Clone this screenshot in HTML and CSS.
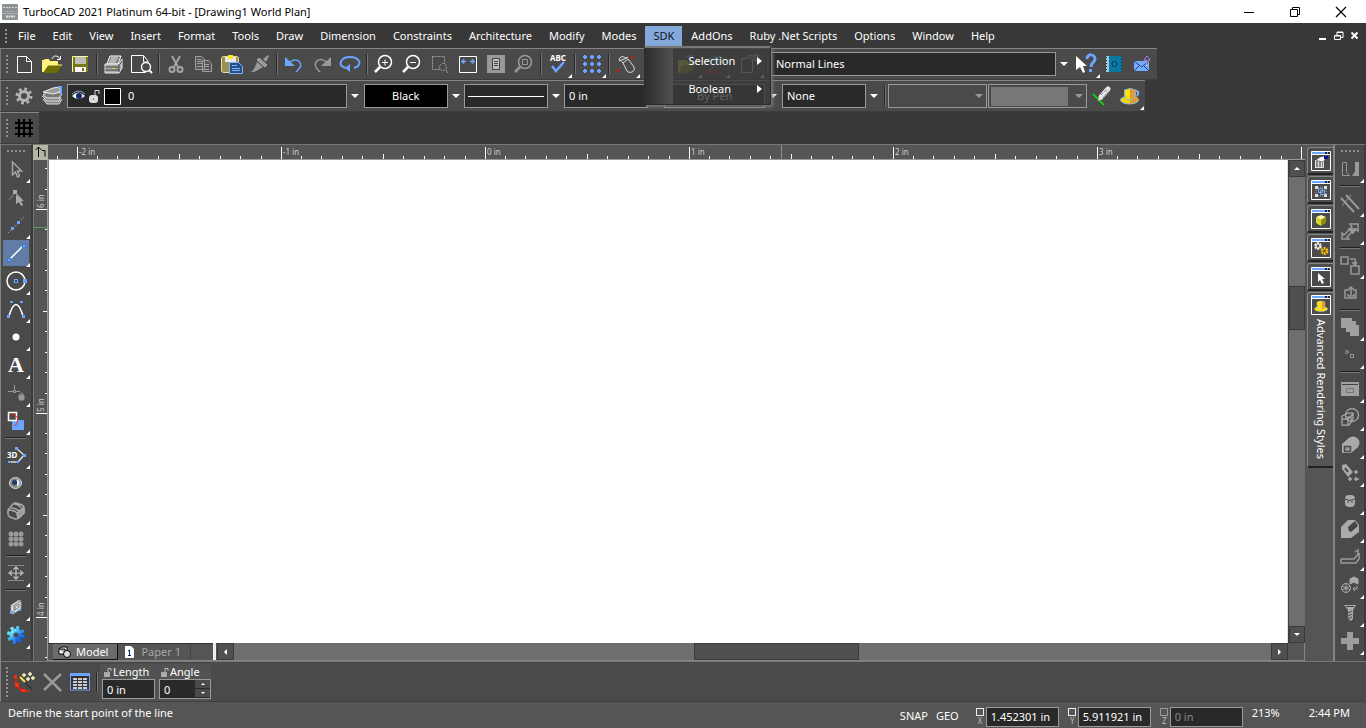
FILE: index.html
```html
<!DOCTYPE html>
<html lang="en">
<head>
<meta charset="utf-8">
<title>TurboCAD 2021 Platinum 64-bit - [Drawing1 World Plan]</title>
<link rel="stylesheet" href="styles.css">
</head>
<body>
<header class="titlebar">
  <svg class="app-icon" viewBox="0 0 16 16"><rect width="16" height="16" rx="1" fill="#8d9294"/><path d="M1 3.500h14" stroke="#d5d8d9" stroke-dasharray="2 1"/><path d="M3 7.500h10" stroke="#b6babb" stroke-dasharray="1 1"/><path d="M0 9.500h16" stroke="#a9adae"/><path d="M4 12.500h9" stroke="#dfe1e2" stroke-width="2" stroke-dasharray="2 .5"/></svg>
  <span class="title">TurboCAD 2021 Platinum 64-bit - [Drawing1 World Plan]</span>
  <div class="window-buttons">
    <button aria-label="Minimize"><svg viewBox="0 0 12 12"><path d="M1 6.500h10" stroke="#000"/></svg></button>
    <button aria-label="Restore"><svg viewBox="0 0 12 12" fill="none" stroke="#000"><path d="M1.500 3.500h7v7h-7zM3.500 3.500v-2h7v7h-2"/></svg></button>
    <button aria-label="Close"><svg viewBox="0 0 12 12"><path d="M1 1l10 10M11 1L1 11" stroke="#000" stroke-width="1.200"/></svg></button>
  </div>
</header>

<nav class="menubar">
  <span class="grip"></span>
  <button>File</button><button>Edit</button><button>View</button><button>Insert</button><button>Format</button><button>Tools</button><button>Draw</button><button>Dimension</button><button>Constraints</button><button>Architecture</button><button>Modify</button><button>Modes</button>
  <div class="menu-open">
    <button class="selected">SDK</button>
    <div class="popup">
      <button>Selection<i></i></button>
      <button>Boolean<i></i></button>
    </div>
  </div>
  <button>AddOns</button><button>Ruby .Net Scripts</button><button>Options</button><button>Window</button><button>Help</button>
  <div class="doc-buttons">
    <button aria-label="Minimize drawing"><svg viewBox="0 0 10 10"><path d="M1 8h7" stroke="#fff" stroke-width="2"/></svg></button>
    <button aria-label="Restore drawing"><svg viewBox="0 0 10 10" fill="none" stroke="#fff"><path d="M.5 4.500h6v4h-6zM.5 5h6M3 4V1h6v5.500H7M3 1.500h6"/></svg></button>
    <button aria-label="Close drawing"><svg viewBox="0 0 10 10"><path d="M1.500 1.500l6 6M7.500 1.500l-6 6" stroke="#fff" stroke-width="2"/></svg></button>
  </div>
</nav>

<section class="bars">
<div class="toolbar">
  <span class="grip"></span>
  <button class="tool" aria-label="New"><svg viewBox="0 0 24 24"><path d="M5.500 4.500h9l5 5v11h-14zM14.500 4.500v5h5" fill="#484848" stroke="#fff"/></svg></button>
  <button class="tool" aria-label="Open"><svg viewBox="0 0 24 24"><path d="M2 8h2l1-1h4l1 2h8v4H8l-4 7H2z" fill="#fff27a"/><path d="M8 13h14l-5 8H3z" fill="#6d6d00"/><path d="M3 20l5-7h14" fill="none" stroke="#fff58b"/><path d="M12 7c1-4 6-4 8 0M20.500 4v3.500H17" fill="none" stroke="#fff"/></svg></button>
  <button class="tool" aria-label="Save"><svg viewBox="0 0 24 24"><path d="M4 4h16v16H4z" fill="#77771c"/><path d="M7 4h11v8H7z" fill="#bcbcbc"/><path d="M7 15h11v5H7z" fill="#f7f7f7"/><path d="M14 16h2v3h-2z" fill="#77771c"/><path d="M4.500 20V4.500h15.500" fill="none" stroke="#fffa9c"/></svg></button>
  <span class="sep"></span>
  <button class="tool" aria-label="Print"><svg viewBox="0 0 24 24"><path d="M8 4h11l-3 8H5z" fill="#777" stroke="#fff"/><path d="M9 6h7M8 8h7M7 10h7" stroke="#eee"/><path d="M3 12h14l3-5v9l-3 5H3z" fill="#aaa" stroke="#eee"/><path d="M3 15h14M3 18h14M17 12v8M18 12l2-3" stroke="#444"/><path d="M10 16.500h3" stroke="#dd3"/></svg></button>
  <button class="tool" aria-label="Print preview"><svg viewBox="0 0 24 24"><path d="M18.500 9.500l-5-6h-12v17h14M13.500 4v6h5" fill="none" stroke="#fff"/><circle cx="16" cy="15" r="4.500" fill="#4a4a4a" stroke="#fff" stroke-width="1.500"/><path d="M19 18l3 3" stroke="#fff" stroke-width="2"/></svg></button>
  <span class="sep"></span>
  <button class="tool" aria-label="Cut"><svg viewBox="0 0 24 24" fill="none" stroke="#a5a5a5" stroke-width="2"><path d="M8 4l6 11M16 4l-6 11"/><circle cx="8" cy="17.500" r="2.500"/><circle cx="16" cy="17.500" r="2.500"/></svg></button>
  <button class="tool" aria-label="Copy"><svg viewBox="0 0 24 24" fill="#555" stroke="#a0a0a0"><path d="M3.500 4.500h6l3 3v10h-9zM5 7.500h4M5 9.500h5M5 11.500h5M5 14.500h5M10.500 8.500h6l3 3v8h-9zM12 12.500h5M12 14.500h5M12 17.500h5"/></svg></button>
  <button class="tool" aria-label="Paste"><svg viewBox="0 0 24 24"><rect x="1.500" y="4.500" width="17" height="16" rx="2" fill="#9a9250" stroke="#e8dc9a"/><path d="M5 5h11v5H5z" fill="#e8e8e8"/><path d="M8 3h5v4H8z" fill="#ffe71c"/><path d="M9.500 10.500h9l4 4v7h-13z" fill="#264f83" stroke="#82b4ff"/><path d="M12 13.500h5M12 16.500h8M12 18.500h8" stroke="#82b4ff"/></svg></button>
  <button class="tool" aria-label="Format painter"><svg viewBox="0 0 24 24" fill="#999"><path d="M15 7l5-4 1 1-3 6z"/><path d="M11 6l8 7-2 2-8-7z" stroke="#aaa"/><path d="M9 10l6 5-5 3-4 2H3l3-3z"/></svg></button>
  <span class="sep"></span>
  <button class="tool" aria-label="Undo"><svg viewBox="0 0 24 24"><path d="M8 10c7-6 15 2 8 8l-2 2" fill="none" stroke="#6aa5ff" stroke-width="1.500"/><path d="M3 5v9h10z" fill="#6aa5ff"/></svg></button>
  <button class="tool" aria-label="Redo"><svg viewBox="0 0 24 24"><path d="M16 10C9 3 1 12 8 18l2 2" fill="none" stroke="#999" stroke-width="1.500"/><path d="M21 5v9H11z" fill="#999"/></svg></button>
  <button class="tool" aria-label="Redraw"><svg viewBox="0 0 24 24"><path d="M8 16C-2 14 3 5 12 5s14 8 4 11" fill="none" stroke="#6aa5ff" stroke-width="2"/><path d="M7 16l5-4v8z" fill="#6aa5ff"/></svg></button>
  <span class="sep"></span>
  <button class="tool" aria-label="Zoom in"><svg viewBox="0 0 24 24" fill="none" stroke="#fff"><circle cx="13" cy="10" r="6.500" stroke-width="1.500"/><path d="M8 15l-5 5" stroke-width="2.500"/><path d="M10 10.500h6M13 7.500v6"/></svg></button>
  <button class="tool" aria-label="Zoom out"><svg viewBox="0 0 24 24" fill="none" stroke="#fff"><circle cx="13" cy="10" r="6.500" stroke-width="1.500"/><path d="M8 15l-5 5" stroke-width="2.500"/><path d="M10 10.500h6"/></svg></button>
  <button class="tool" aria-label="Zoom window"><svg viewBox="0 0 24 24" fill="none" stroke="#a0a0a0"><path d="M4.500 4.500h12v13h-12z" stroke-dasharray="2 1"/><circle cx="15" cy="15" r="3.500" fill="#4a4a4a" stroke-dasharray="2 1"/><path d="M18 18l2 3"/></svg></button>
  <button class="tool" aria-label="Zoom extents"><svg viewBox="0 0 24 24"><path d="M3.500 4.500h17v16h-17z" fill="none" stroke="#fff"/><path d="M8 7v5L5 9.500zM16 7v5l3-2.500zM7 9h3v1H7zM14 9h3v1h-3z" fill="#6aa5ff" stroke="#6aa5ff" stroke-width=".5"/></svg></button>
  <button class="tool" aria-label="Full view"><svg viewBox="0 0 24 24"><path d="M3 3h18v18H3z" fill="#999"/><path d="M8.500 6.500h7v11h-7z" fill="#bbb" stroke="#444"/><path d="M10 9.500h4M10 11.500h4M10 13.500h4" stroke="#444"/></svg></button>
  <button class="tool" aria-label="Zoom selected"><svg viewBox="0 0 24 24" fill="none" stroke="#999"><circle cx="13" cy="10" r="6.500" stroke-width="1.500"/><path d="M8 15l-5 5" stroke-width="2.500"/><path d="M10.500 7.500h5v5h-5z"/></svg></button>
  <span class="sep"></span>
  <button class="tool more" aria-label="Spelling"><svg viewBox="0 0 24 24"><text x="12" y="9" text-anchor="middle" class="abc">ABC</text><path d="M6 14l4 5 8-9" fill="none" stroke="#6aa5ff" stroke-width="2.500"/></svg></button>
  <span class="sep"></span>
  <button class="tool more" aria-label="Grid"><svg viewBox="0 0 24 24" fill="none" stroke="#6aa5ff" stroke-width="2"><path d="M3 5h18M3 12h18M3 19h18" stroke-dasharray="4 3"/><path d="M5 3v18M12 3v18M19 3v18" stroke-dasharray="4 3"/></svg></button>
  <span class="sep"></span>
  <button class="tool more" aria-label="Mouse settings"><svg viewBox="0 0 24 24" fill="none" stroke="#ddd"><path d="M9 11l5-4 6 8c2 5-5 7-7 4zM9 11c-2-5-6-1-3-5 3-4 5 2 8-1M5 9l8-3"/><path d="M16 4l3 3M19 4l-3 3M2 17l3 3M5 17l-3 3" stroke="#e00"/></svg></button>
  <button class="tool" aria-label="Workplane"></button>
  <span class="sep"></span>
  <button class="tool more" aria-label="Open workspace"><svg viewBox="0 0 24 24"><path d="M2 8h8l2 2h7v3H7l-4 8H2z" fill="#d3c94c"/><path d="M7 13h12l-5 8H3z" fill="#8c8c18"/><path d="M10 6l5-4 4 5z" fill="#6aa5ff"/></svg></button>
  <button class="tool more" aria-label="3D view"><svg viewBox="0 0 24 24" fill="none"><path d="M5 7l8-3 6 2-6 4z" stroke="#3aa99a" stroke-width="2"/><path d="M2 20h12" stroke="#f22" stroke-width="2"/><path d="M5 19l8-8" stroke="#4bc"/></svg></button>
  <span class="sep"></span>
  <button class="tool more" aria-label="Properties"><svg viewBox="0 0 24 24" fill="none" stroke="#ccc"><path d="M3.500 6.500h11v14h-11z"/><path d="M7 7l4-4 4 1 5-2v7l-6-1" fill="#777"/></svg></button>
  <span class="sep"></span>
  <label class="combo style-combo"><select aria-label="Style"><option>Normal Lines</option></select><i class="arrow"></i></label>
  <button class="tool more" aria-label="Context help"><svg viewBox="0 0 24 24"><path d="M2 4v14l4-3 3 6 2-1-2-6h4z" fill="#fff"/><path d="M13 7c0-6 8-5 8 0 0 4-4 3-4 8" fill="none" stroke="#6aa5ff" stroke-width="3"/><path d="M15 17h3v3h-3z" fill="#6aa5ff"/></svg></button>
  <button class="tool" aria-label="Address book"><svg viewBox="0 0 24 24"><path d="M4 4h16v16H4z" fill="#0a78a4"/><path d="M4 4h3v16H4z" fill="#9ccbe0"/><circle cx="12.500" cy="12" r="2.500" fill="none" stroke="#073a57"/><path d="M4.500 5v15M19.500 4v16" stroke="#222" stroke-dasharray="1 2"/></svg></button>
  <button class="tool" aria-label="Send mail"><svg viewBox="0 0 24 24"><path d="M4 9h15v10H4z" fill="#75acff"/><path d="M4 9l7.500 6L19 9M4 19l5-5M19 19l-5-5" fill="none" stroke="#263f70"/><path d="M16.500 13V8H14l3-4 3 4h-2v5z" fill="#5220a8" stroke="#eee" stroke-width=".5"/></svg></button>
</div>

<div class="toolbar">
  <span class="grip"></span>
  <button class="tool" aria-label="Options"><svg viewBox="0 0 24 24"><circle cx="12" cy="12" r="4.500" fill="none" stroke="#b3b3b3" stroke-width="3"/><circle cx="12" cy="12" r="7" fill="none" stroke="#b3b3b3" stroke-width="3" stroke-dasharray="2.750 2.750"/></svg></button>
  <button class="tool" aria-label="Layers"><svg viewBox="0 0 24 24"><path d="M3 15l4 5h12l3-5M2 12l5 5h12l2-4" fill="#888" stroke="#ddd"/><path d="M7 8h11l4 2-3 4H7l-4-3z" fill="#777" stroke="#eee"/><path d="M3 8l10-4 7-1v5l-7 2z" fill="#9a9a9a" stroke="#eee"/><path d="M18 3h3v7" fill="none" stroke="#6aa5ff" stroke-width="2"/></svg></button>
  <label class="combo layer-combo">
    <svg class="layer-icons" viewBox="0 0 56 20"><path d="M2 10q6-7 13 0-7 6-13 0" fill="#fff"/><path d="M2 8q7-6 13 0" fill="none" stroke="#8ca6d8"/><circle cx="9" cy="10" r="3" fill="#112c68"/><rect x="19" y="9" width="9" height="8" rx="3" fill="#ddd"/><path d="M25 10V4.500h4V8" fill="none" stroke="#ddd"/><path d="M23.500 12v2" stroke="#777"/><path d="M34.500 2.500h16v16h-16z" fill="#000" stroke="#fff"/></svg>
    <select aria-label="Layer"><option>0</option></select><i class="arrow"></i></label>
  <label class="combo small black"><select aria-label="Pen color"><option>Black</option></select><i class="arrow"></i></label>
  <label class="combo small line"><select aria-label="Line pattern"><option aria-label="Solid"></option></select><i class="arrow"></i></label>
  <label class="combo small"><select aria-label="Pen width"><option>0 in</option></select><i class="arrow"></i></label>
  <label class="combo pen-combo"><select aria-label="Brush color"><option>By Pen</option></select><i class="arrow"></i></label>
  <label class="combo small"><select aria-label="Brush pattern"><option>None</option></select><i class="arrow"></i></label>
  <span class="sep"></span>
  <label class="combo disabled"><select aria-label="Material" disabled><option></option></select><i class="arrow"></i></label>
  <label class="combo disabled filled"><select aria-label="Luminance" disabled><option></option></select><i class="arrow"></i></label>
  <button class="tool" aria-label="Pick style"><svg viewBox="0 0 24 24"><path d="M3 10l11 11" stroke="#0e0" stroke-width="1.500"/><path d="M11 13l7-8" stroke="#e8e8e8" stroke-width="5" stroke-linecap="round"/><path d="M11 11l6-6M13 14l6-8" stroke="#555" stroke-dasharray="1 1"/><path d="M8 17l1-4 3 2z" fill="#ddd"/></svg></button>
  <button class="tool more" aria-label="Render"><svg viewBox="0 0 24 24"><ellipse cx="11.500" cy="16" rx="9" ry="4" fill="#f6d500" stroke="#80b4ef"/><path d="M12 12.500h7l1.500 3.500-3 2.500-5.500 1z" fill="#e49a35"/><path d="M6.500 6q5.500-3 11 0v5q-1 5-5.500 5t-5.500-5z" fill="#ffe200" stroke="#80b4ef"/><path d="M12 5q3 0 5 1v5q-1 4-5 5z" fill="#e49a35"/><path d="M18 7q4 0 1 5" fill="none" stroke="#80b4ef" stroke-width="2"/></svg></button>
</div>

<div class="toolbar">
  <span class="grip"></span>
  <button class="tool" aria-label="Show grid"><svg viewBox="0 0 24 24"><path d="M3 7h18M3 12h18M3 18h18M7 3v18M12 3v18M18 3v18" stroke="#000" stroke-width="2"/></svg></button>
</div>
</section>

<main class="main">
  <aside class="side left">
    <span class="grip-h"></span>
    <button class="tool more" aria-label="Select"><svg viewBox="0 0 24 24"><path d="M8.500 5v13l3-3 2 5 2-1-2-5h4z" fill="#4a4a4a" stroke="#a5a5a5" stroke-width="1.500"/></svg></button>
    <button class="tool" aria-label="Edit node"><svg viewBox="0 0 24 24"><path d="M12 9v10l3-2 2 4 2-1-2-4h3z" fill="#aaa"/><path d="M9 5h4v4H9z" fill="#aaa"/><path d="M10 9l-5 6M13 9l5 5" stroke="#888"/></svg></button>
    <button class="tool more" aria-label="Construction line"><svg viewBox="0 0 24 24"><path d="M4 20L20 4" stroke="#999" stroke-dasharray="2 1"/><path d="M7 14h3v3H7zM13 8h3v3h-3z" fill="#6aa5ff"/></svg></button>
    <button class="tool more active" aria-label="Line"><svg viewBox="0 0 24 24"><path d="M5 19L19 5" stroke="#fff" stroke-width="1.500"/><path d="M3.500 17.500h3v3h-3zM18.500 3.500h3v3h-3z" fill="#75a9f3" stroke="#317bdc"/></svg></button>
    <button class="tool more" aria-label="Circle"><svg viewBox="0 0 24 24"><circle cx="12" cy="12" r="9" fill="none" stroke="#fff" stroke-width="1.500"/><path d="M10 10h4v4h-4zM19 10h4v4h-4z" fill="#6aa5ff"/><path d="M11 11h2v2h-2z" fill="#174f9e"/></svg></button>
    <button class="tool more" aria-label="Curve"><svg viewBox="0 0 24 24"><path d="M5 19Q12-4 19 19" fill="none" stroke="#fff" stroke-width="1.500"/><path d="M6 4h3v2H6zM16 4h3v2h-3zM3 18h3v3H3zM18 18h3v3h-3z" fill="#6aa5ff"/></svg></button>
    <button class="tool more" aria-label="Point"><svg viewBox="0 0 24 24"><circle cx="12" cy="12" r="3.500" fill="#fff"/></svg></button>
    <button class="tool more" aria-label="Text"><span class="glyph-a">A</span></button>
    <button class="tool more" aria-label="Constraint"><svg viewBox="0 0 24 24" fill="none" stroke="#999"><path d="M4 10.500h5M16 10.500h-4M10.500 4v5M9.500 9.500h2v2h-2z"/><rect x="15" y="14" width="5" height="5" rx="1" fill="#999"/><path d="M16 14c0-3 3-3 3 0"/></svg></button>
    <button class="tool more" aria-label="Block"><svg viewBox="0 0 24 24"><path d="M8 11h12v10H8z" fill="#6aa5ff"/><path d="M4.500 3.500h8v8h-8z" fill="#4a4a4a" stroke="#fff" stroke-width="1.500"/><path d="M6 5c6 0 11 5 5 12" fill="none" stroke="#e22"/></svg></button>
    <span class="sep-h"></span>
    <button class="tool more" aria-label="3D polyline"><svg viewBox="0 0 24 24"><path d="M12 5l8 7-6 7H4" fill="none" stroke="#ddd" stroke-width="1.500"/><text x="3" y="15" class="three-d">3D</text><path d="M11 4h3v3h-3zM19 11h3v3h-3zM12 18h3v2h-3zM4 18h3v2H4z" fill="#6aa5ff"/></svg></button>
    <button class="tool more" aria-label="Sphere"><svg viewBox="0 0 24 24"><ellipse cx="11.500" cy="12" rx="6" ry="5.500" fill="#888" stroke="#ddd"/><path d="M13 8q6 4 0 8z" fill="#eee"/><circle cx="10.500" cy="11.500" r="2.500" fill="#26395f"/><path d="M15 11h2v2h-2z" fill="#6aa5ff"/></svg></button>
    <button class="tool more" aria-label="Mesh"><svg viewBox="0 0 24 24" fill="none" stroke="#aaa" stroke-width="1.500"><path d="M4 11l5-6q1-1 3-1l6 2q2 1 2 3v5l-5 5q-2 1-4 1l-5-2q-2-1-2-3zM4 11q6 0 9 3l7-6M7 9q5 0 8 3M10 5q5 0 7 4"/><path d="M13 15l7-5v4l-6 5z" fill="#999"/></svg></button>
    <button class="tool more" aria-label="Pattern"><svg viewBox="0 0 24 24" fill="#999"><circle cx="7" cy="7" r="2.500"/><circle cx="12" cy="7" r="2.500"/><circle cx="17" cy="7" r="2.500"/><circle cx="7" cy="12" r="2.500"/><circle cx="12" cy="12" r="2.500"/><circle cx="17" cy="12" r="2.500"/><circle cx="7" cy="17" r="2.500"/><circle cx="12" cy="17" r="2.500"/><circle cx="17" cy="17" r="2.500"/></svg></button>
    <span class="sep-h"></span>
    <button class="tool more" aria-label="Dimension"><svg viewBox="0 0 24 24" fill="none" stroke="#bbb"><path d="M4 4.500h16M4 19.500h16" stroke="#888"/><path d="M12 6v12M6 12h12M9.500 8.500L12 6l2.500 2.500M9.500 15.500L12 18l2.500-2.500M8 9.500L5 12l3 2.500M16 9.500l3 2.500-3 2.500" stroke-width="1.250"/></svg></button>
    <span class="sep-h"></span>
    <button class="tool more" aria-label="Wall"><svg viewBox="0 0 24 24"><path d="M7 10l8-5 2 1v8l-8 5-2-1z" fill="#e5e5e5" stroke="#999"/><path d="M10 11v7M9 11l8-5M11 15l4-3v-3l-4 3z" stroke="#777" fill="none"/><path d="M6 16h3v3H6zM14 14h3v2h-3z" fill="#6aa5ff"/></svg></button>
    <button class="tool more" aria-label="Parts"><svg viewBox="0 0 24 24"><defs><linearGradient id="cog" x2="1" y2="1"><stop stop-color="#7ff"/><stop offset="1" stop-color="#04d"/></linearGradient></defs><g fill="none" stroke="url(#cog)"><circle cx="12" cy="12" r="4.500" stroke-width="4"/><circle cx="12" cy="12" r="7" stroke-width="4" stroke-dasharray="3 2.500"/></g></svg></button>
  </aside>

  <section class="workspace">
    <div class="origin"><svg viewBox="0 0 14 14" fill="none" stroke="#000"><path d="M5.500 12V2M2.500 5l3-3 3 3M9 5.500h3v6"/></svg></div>
    <svg class="ruler top">
      <defs><pattern id="inch-x" x="29" width="204" height="15" patternUnits="userSpaceOnUse"><path d="M0 2h1v12H0zM20 11h1v3h-1zM40 11h1v3h-1zM61 11h1v3h-1zM81 11h1v3h-1zM102 9h1v5h-1zM122 11h1v3h-1zM143 11h1v3h-1zM163 11h1v3h-1zM184 11h1v3h-1z" fill="#fff"/></pattern></defs>
      <rect width="100%" height="15" fill="url(#inch-x)"/>
      <path d="M733 0h1v14h-1z" fill="#8c8c8c"/>
      <g><text x="31" y="10">-2 in</text><text x="235" y="10">-1 in</text><text x="439" y="10">0 in</text><text x="643" y="10">1 in</text><text x="847" y="10">2 in</text><text x="1051" y="10">3 in</text></g>
    </svg>
    <svg class="ruler side-ruler">
      <defs><pattern id="inch-y" y="49" width="15" height="204" patternUnits="userSpaceOnUse"><path d="M2 0v1h12V0zM11 20v1h3v-1zM11 40v1h3v-1zM11 61v1h3v-1zM11 81v1h3v-1zM9 102v1h5v-1zM11 122v1h3v-1zM11 143v1h3v-1zM11 163v1h3v-1zM11 184v1h3v-1z" fill="#fff"/></pattern></defs>
      <rect width="15" height="100%" fill="url(#inch-y)"/>
      <path d="M0 67h14v1H0z" fill="#4fa34f"/>
      <g><text transform="translate(10 48) rotate(-90)">6 in</text><text transform="translate(10 252) rotate(-90)">5 in</text><text transform="translate(10 456) rotate(-90)">4 in</text></g>
    </svg>
    <div class="canvas"></div>
    <div class="vscroll">
      <button aria-label="Scroll up"><i class="up"></i></button>
      <span class="track"></span><span class="thumb"></span><span class="track after"></span>
      <button aria-label="Scroll down"><i class="down"></i></button>
    </div>
    <div class="sheetbar">
      <div class="sheets">
        <button class="current"><svg viewBox="0 0 14 14"><path d="M1 4l3-2h5v5l-2 2H1z" fill="#fff" stroke="#000"/><path d="M1 4h6v5" fill="#aaa" stroke="#000"/><circle cx="9" cy="9" r="3.500" fill="#ddd" stroke="#000"/></svg>Model</button>
        <button><svg viewBox="0 0 14 14"><path d="M2 1h6l3 3v9H2z" fill="#fff"/><path d="M5 6l1.500-1v5M5 10.500h3" fill="none" stroke="#00206a"/></svg>Paper 1</button>
      </div>
      <span class="splitter"></span>
      <button class="sb" aria-label="Scroll left"><i class="lt"></i></button>
      <span class="htrack"></span><span class="hthumb"></span><span class="htrack after"></span>
      <button class="sb" aria-label="Scroll right"><i class="rt"></i></button>
      <span class="corner"></span>
    </div>
  </section>

  <aside class="dock">
    <button aria-label="Selection info"><svg viewBox="0 0 20 20"><use href="#win"/><path d="M4 9h9v8H4z" fill="#ddd"/><path d="M5 11h7M5 13h7M5 15h7" stroke="#333" stroke-dasharray="2 1"/><path d="M5 9l4-3 5-1v4l-3 2z" fill="#fff" stroke="#333" stroke-width=".5"/><path d="M13 5h4v3h-4z" fill="#019"/></svg></button>
    <button aria-label="Blocks"><svg viewBox="0 0 20 20"><use href="#win"/><path d="M5 7h10v9H5z" fill="none" stroke="#aaa" stroke-dasharray="1 1"/><path d="M4 6h3v3H4zM13 6h3v3h-3zM4 14h3v3H4zM13 14h3v3h-3z" fill="#ddd"/><path d="M7.500 8.500h4v4h-4zM9.500 10.500h4v4h-4z" fill="none" stroke="#79aaf2"/></svg></button>
    <button aria-label="Materials"><svg viewBox="0 0 20 20"><use href="#win"/><path d="M5 8l5-2 5 2-5 3z" fill="#fff9a0"/><path d="M5 8l5 3v6l-5-3z" fill="#d9d42e"/><path d="M15 8l-5 3v6l5-3z" fill="#918d0b"/></svg></button>
    <button aria-label="Settings"><svg viewBox="0 0 20 20"><use href="#win"/><circle cx="7" cy="8" r="2.500" fill="none" stroke="#fff" stroke-width="2.500" stroke-dasharray="2 .6"/><circle cx="13.500" cy="13" r="2.500" fill="none" stroke="#eeb90a" stroke-width="3" stroke-dasharray="2 .6"/></svg></button>
    <button aria-label="Selector"><svg viewBox="0 0 20 20"><use href="#win"/><path d="M7 6v9l2-2 2 4 2-1-2-4h3z" fill="#fff"/></svg></button>
    <button class="opened"><svg viewBox="0 0 20 20"><use href="#win"/><ellipse cx="10" cy="14" rx="6.500" ry="2.500" fill="#ffe000" stroke="#bcd3eb" stroke-width=".5"/><path d="M6 7q4-2 8 0v3q0 4-4 4t-4-4z" fill="#ffdc0a" stroke="#bcd3eb" stroke-width=".5"/><path d="M11 6q2 0 3 1v3q0 3-3 4z" fill="#e49a35"/></svg><span>Advanced Rendering Styles</span></button>
    <svg class="symbols"><symbol id="win" viewBox="0 0 20 20"><path d="M.5.5h19v19H.5z" fill="#4b4b4b" stroke="#fff"/><path d="M1 1h18v2H1z" fill="#6aa5ff"/><path d="M14 2h2M17 2h2" stroke="#222" stroke-width="2"/><path d="M0 3.500h20" stroke="#fff"/></symbol></svg>
  </aside>

  <aside class="side right">
    <span class="grip-h"></span>
    <button class="tool more" aria-label="Snap"><svg viewBox="0 0 24 24"><path d="M4.500 5.500h4v9l3 4h-7z" fill="none" stroke="#999"/><path d="M17 5h4v14h-7l3-5z" fill="#999"/></svg></button>
    <span class="sep-h"></span>
    <button class="tool more" aria-label="Trim"><svg viewBox="0 0 24 24" stroke="#999" stroke-width="2"><path d="M3 7l13 14M8 4l13 14"/><path d="M4 15l9-11" stroke-width="1"/></svg></button>
    <button class="tool more" aria-label="Stretch"><svg viewBox="0 0 24 24" fill="none" stroke="#999" stroke-width="1.500"><path d="M4 20v-6l2 2 8-8-2-3h8v7l-3-2-8 8 2 2z"/><path d="M11 10h7l-3 4z" fill="#999"/></svg></button>
    <span class="sep-h"></span>
    <button class="tool more" aria-label="Align"><svg viewBox="0 0 24 24" fill="none" stroke="#999" stroke-width="1.500"><path d="M3 4h7v7H3zM13 13h8v8h-8zM12 6h5v5M14 9l3 3 2-3"/></svg></button>
    <button class="tool" aria-label="Extract"><svg viewBox="0 0 24 24" fill="none" stroke="#999" stroke-width="1.500"><path d="M11 9H7v8h11V9h-3M13 14V6M10 9l3-3 3 3M10 13v2h6v-2"/></svg></button>
    <span class="sep-h"></span>
    <button class="tool more" aria-label="Union"><svg viewBox="0 0 24 24" fill="#a0a0a0"><path d="M3 3h11v3h4v4h3v11h-9v-4H8v-4H3z"/></svg></button>
    <button class="tool more" aria-label="Nodes"><svg viewBox="0 0 24 24" fill="none" stroke="#999"><path d="M8 7v4l3-2zM12.500 11.500h3v3h-3z"/></svg></button>
    <span class="sep-h"></span>
    <button class="tool more" aria-label="Palette"><svg viewBox="0 0 24 24"><path d="M3 5h18v14H3z" fill="#a0a0a0"/><path d="M4 7.500h16" stroke="#444"/><path d="M8.500 11.500h7v4h-7z" fill="none" stroke="#777"/></svg></button>
    <button class="tool more" aria-label="Boolean"><svg viewBox="0 0 24 24" fill="none" stroke="#aaa" stroke-width="1.250"><circle cx="14" cy="10" r="6.500"/><path d="M4 11l6-3h5v6l-4 6H4zM4 14h6v6M10 14l5-5M8 12h5v5"/></svg></button>
    <button class="tool more" aria-label="Subtract"><svg viewBox="0 0 24 24" fill="#aaa"><circle cx="15" cy="10" r="6.500"/><path d="M4 11l7-6 9 9-7 6H4z"/><path d="M6.500 13.500h6v5h-6z" fill="#999" stroke="#4a4a4a" stroke-width="1.500"/></svg></button>
    <button class="tool more" aria-label="Spray"><svg viewBox="0 0 24 24"><path d="M4 4l4-1 7 8-5 5-6-8z" fill="#aaa"/><path d="M7 7l3 4" stroke="#444" stroke-width="2"/><path d="M18 9v4M16 11h4M12 16v4M10 18h4M18 16v4M16 18h5" stroke="#aaa" stroke-width="1.500"/></svg></button>
    <button class="tool more" aria-label="Cylinder"><svg viewBox="0 0 24 24"><rect x="7" y="6" width="10" height="12" rx="4" fill="#aaa"/><path d="M7 10q5 3 10 0M9 13h2M13 13h2" fill="none" stroke="#444"/></svg></button>
    <button class="tool more" aria-label="Bend"><svg viewBox="0 0 24 24"><path d="M3 10l7-7h7l4 5v7l-8 6H3z" fill="#aaa"/><path d="M10 10l7-6 3 5-7 6-2-1z" fill="#444"/></svg></button>
    <button class="tool more" aria-label="Lathe"><svg viewBox="0 0 24 24" fill="none" stroke="#999" stroke-width="1.500"><path d="M3 14h13l4-5V5l-3 2M3 14v4h15l3-4V8"/></svg></button>
    <button class="tool more" aria-label="Assemble"><svg viewBox="0 0 24 24" fill="none" stroke="#aaa"><circle cx="8" cy="15" r="4.500"/><path d="M8 10v10M4 13l8 4M4 17l8-4"/><path d="M12 6l4-2 4 2v5l-4-2-4 2z" fill="#aaa"/><path d="M19 13v3h-4M17 14l-2 2 2 2"/></svg></button>
    <button class="tool more" aria-label="Screw"><svg viewBox="0 0 24 24"><path d="M6 4h12l-3 5v9l-2 2-3-2V9z" fill="#aaa"/><path d="M8 5.500h8M10 12l4-2M10 15l4-2M10 18l4-2" stroke="#444"/></svg></button>
    <button class="tool more" aria-label="Add"><svg viewBox="0 0 24 24"><path d="M9 3h6v6h6v6h-6v6H9v-6H3V9h6z" fill="#9d9d9d"/></svg></button>
  </aside>
</main>

<section class="inspector">
  <span class="grip"></span>
  <button class="tool" aria-label="Local menu"><svg viewBox="0 0 24 24"><path d="M4 7v8l6 6h7" fill="none" stroke="#e31c0c" stroke-width="2"/><path d="M2 5h3v3H2zM3 13h4v4H3zM9 19h4v3H9z" fill="#ff2c12"/><path d="M8 8l12 11" stroke="#222"/><path d="M8 7l5 5" stroke="#ffe33c" stroke-width="2"/><path d="M12 3v4M10 5h4M18 2v4M16 4h4M16 7v4M14 9h4M21 6v4M19 8h4" stroke="#f3f1c0" stroke-width="1.500"/></svg></button>
  <button class="tool" aria-label="Cancel"><svg viewBox="0 0 24 24"><path d="M4 4l17 17M21 4L4 20" stroke="#999" stroke-width="2.500"/></svg></button>
  <button class="tool" aria-label="Table"><svg viewBox="0 0 24 24"><path d="M2.500 4h19v16h-19z" fill="#333" stroke="#6aa5ff"/><path d="M2 4.500h20" stroke="#6aa5ff" stroke-width="3"/><path d="M5 9h14M5 12h14M5 15h14M5 18h14" stroke="#fff" stroke-width="1.500" stroke-dasharray="4 1"/></svg></button>
  <span class="sep"></span>
  <div class="fields">
    <div class="field"><label for="len"><svg viewBox="0 0 10 10"><path d="M1 5h6v5H1z" fill="#aaa"/><path d="M5 5V1.500h3V4M3.500 7v2" fill="none" stroke="#bbb"/></svg>Length</label><input id="len" value="0 in"></div>
    <div class="field"><label for="ang"><svg viewBox="0 0 10 10"><path d="M1 5h6v5H1z" fill="#aaa"/><path d="M5 5V1.500h3V4M3.500 7v2" fill="none" stroke="#bbb"/></svg>Angle</label>
      <div class="spin"><input id="ang" value="0"><div><button aria-label="Increase"><i class="up"></i></button><button aria-label="Decrease"><i class="down"></i></button></div></div></div>
  </div>
</section>

<footer class="status">
  <span class="hint">Define the start point of the line</span>
  <button>SNAP</button><button>GEO</button>
  <div class="coord"><label for="cx"><input type="checkbox" aria-label="Lock X">X</label><input id="cx" value="1.452301 in"></div>
  <div class="coord"><label for="cy"><input type="checkbox" aria-label="Lock Y">Y</label><input id="cy" value="5.911921 in"></div>
  <div class="coord off"><label for="cz"><input type="checkbox" aria-label="Lock Z" disabled>Z</label><input id="cz" value="0 in" disabled></div>
  <span class="zoom">213%</span><span class="clock">2:44 PM</span>
</footer>
</body>
</html>
```
FILE: styles.css
```css
* { box-sizing: border-box; }
body {
  margin: 0;
  min-height: 100vh;
  display: flex;
  flex-direction: column;
  background: #383838;
  color: #fff;
  font: 11px/16px "Noto Sans", "Open Sans", sans-serif;
  overflow: hidden;
}
button, input, select { font: inherit; color: inherit; margin: 0; padding: 0; border: 0; background: none; border-radius: 0; }
button { display: flex; align-items: center; justify-content: center; white-space: nowrap; }
svg { display: block; flex: none; }
i { display: block; flex: none; }

/* title and menu */
.titlebar { display: flex; align-items: center; height: 23px; padding-left: 2px; background: #fff; color: #000; }
.app-icon { width: 16px; height: 16px; margin-right: 5px; }
.window-buttons { display: flex; margin-left: auto; padding-right: 2px; }
.window-buttons button { width: 46px; height: 21px; }
.window-buttons svg { width: 12px; height: 12px; }
.menubar { display: flex; align-items: center; gap: 1px; height: 25px; padding-left: 4px; }
.menubar button { height: 20px; padding: 0 8px; }
.menubar .grip { width: 5px; height: 14px; }
.menu-open { position: relative; }
.menubar .selected { background: #86a9dc; color: #10131a; }
.popup {
  position: absolute; z-index: 5; top: 20px; left: -1px;
  width: 127px;
  border: 1px solid #2c2c2c; border-top: 2px solid #777;
  background: linear-gradient(90deg, #2e2e2e, #505050) 0 0 / 28px 100% no-repeat, rgba(57, 57, 57, .8);
  box-shadow: 2px 2px 3px #777;
}
.menubar .popup button { width: 100%; height: 28px; padding: 0 8px 2px 43px; justify-content: space-between; }
.popup i { border: 4px solid transparent; border-left: 5px solid #fff; border-right: 0; }
.doc-buttons { display: flex; gap: 6px; margin-left: auto; padding-right: 6px; }
.doc-buttons button { padding: 0; }
.doc-buttons svg { width: 10px; height: 10px; }

/* horizontal toolbars */
.bars { display: flex; flex-direction: column; align-items: flex-start; height: 96px; }
.toolbar { display: flex; align-items: center; height: 32px; padding-left: 4px; background: #4a4a4a; border-top: 1px solid #858585; border-left: 1px solid #777; border-bottom: 1px solid #3c3c3c; padding-right: 1px; }
.grip { flex: none; width: 5px; height: 18px; background: repeating-linear-gradient(#909090 0 2px, transparent 2px 4px) 1px 0 / 2px 100% no-repeat; }
.tool { position: relative; flex: none; width: 28px; height: 28px; }
.tool svg { width: 24px; height: 24px; }
.tool.more::after { content: ""; position: absolute; right: 0; bottom: 0; border: 2px solid #fff; border-top-color: transparent; border-left-color: transparent; }
.sep { flex: none; width: 6px; height: 20px; background: linear-gradient(90deg, #262626 1px, #787878 1px) 2px 0 / 2px 100% no-repeat; }
.abc { font: bold 8px "Noto Sans", sans-serif; fill: #fff; }
.three-d { font: bold 8px "Noto Sans", sans-serif; fill: #fff; }
.glyph-a { font: bold 22px/24px "Liberation Serif", serif; }

.combo { position: relative; display: flex; align-items: center; flex: none; }
.combo select { appearance: none; width: 84px; height: 24px; padding: 0 4px; background: #292929; border: 1px solid #9a9a9a; }
.arrow { width: 8px; margin: 0 4px; border: 4px solid transparent; border-top-color: #fff; border-bottom: 0; }
.layer-combo, .pen-combo { padding-right: 1px; }
.style-combo { margin-left: 1px; }
.style-combo select { width: 285px; }
.layer-combo { margin-left: 1px; }
.layer-combo select { width: 280px; padding-left: 60px; }
.layer-icons { position: absolute; left: 3px; width: 56px; height: 20px; pointer-events: none; }
.combo.black select { background: #000; padding-left: 27px; }
.line select { background: linear-gradient(#fff, #fff) center / 76px 1px no-repeat #292929; }
.pen-combo select { width: 101px; padding-left: 32px; }
.disabled { margin-right: 1px; }
.disabled select { width: 99px; background: #4a4a4a; opacity: 1; }
.disabled .arrow { position: absolute; right: 0; border-top-color: #999; }
.filled select { background: linear-gradient(#787878, #787878) 2px center / 77px 19px no-repeat #4a4a4a; }

/* drawing area */
.main { flex: 1; display: flex; min-height: 0; }
.side { width: 33px; flex: none; display: flex; flex-direction: column; align-items: center; background: #4a4a4a; border-top: 1px solid #777; border-left: 1px solid #858585; border-right: 2px solid #3b3b3b; }
.side.right { border-left-width: 2px; }
.side .tool.active::before { content: ""; position: absolute; inset: 1px; background: #617da6; }
.side .tool svg { position: relative; }
.grip-h { flex: none; width: 18px; height: 10px; background: repeating-linear-gradient(90deg, #909090 0 2px, transparent 2px 4px) 0 5px / 100% 2px no-repeat; }
.sep-h { flex: none; width: 20px; height: 6px; background: linear-gradient(#202020 1px, #777 1px) 0 2px / 100% 2px no-repeat; }
.workspace { flex: 1; min-width: 0; display: grid; grid-template-columns: 15px 1fr 17px; grid-template-rows: 15px 1fr 18px; background: #555; border-top: 1px solid #777; }
.origin { background: #b5b5a5; }
.origin svg { width: 14px; height: 14px; }
.ruler { background: #555; width: 100%; height: 100%; }
.ruler text { font: 8px "Noto Sans", sans-serif; fill: #ccc; }
.top { grid-column: 2 / 4; border-bottom: 1px solid #999; }
.side-ruler { grid-row: 2 / 4; border-right: 1px solid #999; border-left: 1px solid #777; }
.canvas { background: #fff; border-left: 1px solid #777; border-right: 1px solid #ddd; }
.vscroll { display: flex; flex-direction: column; border-left: 1px solid #3e3e3e; background: #6e6e6e; }
.vscroll button, .sb, .thumb, .hthumb { background: #505050; border: 1px solid #3a3a3a; }
.vscroll button { height: 17px; }
.track { flex: 110; }
.track.after { flex: 297; }
.thumb { height: 44px; }
.up, .down { border: 3px solid transparent; border-bottom-color: #fff; border-top: 0; }
.down { border-bottom: 0; border-top: 3px solid #fff; }
.lt, .rt { border: 3px solid transparent; border-right-color: #fff; border-left: 0; }
.rt { border-right: 0; border-left: 3px solid #fff; }
.sheetbar { grid-column: 2 / 4; display: flex; background: #555; border-bottom: 1px solid #858585; }
.sheets { display: flex; width: 165px; padding-left: 5px; border-top: 1px solid #333; }
.sheets button { height: 16px; padding: 0 9px 0 5px; gap: 4px; color: #a5a5a5; border-right: 1px solid #444; }
.sheets .current { background: #6b6b6b; color: #fff; border-bottom: 1px solid #111; border-right-color: #111; }
.sheets svg { width: 14px; height: 14px; }
.splitter { width: 3px; background: #eee; margin-right: 1px; }
.sb { width: 17px; }
.htrack { flex: 460; background: #6e6e6e; }
.htrack.after { flex: 412; }
.hthumb { width: 165px; }
.corner { width: 17px; border-right: 1px solid #858585; }

.dock { flex: none; width: 28px; padding: 2px 0 0 2px; background: #555; border-top: 1px solid #777; }
.dock button { flex-direction: column; width: 26px; height: 28px; margin-bottom: 1px; background: #4e4e4e; border: 1px solid #858585; border-right: 0; border-bottom: 2px solid #222; border-radius: 3px 0 0 3px; }
.dock svg { width: 20px; height: 20px; }
.dock .symbols { position: absolute; width: 0; height: 0; }
.dock .opened { height: 176px; justify-content: flex-start; gap: 4px; padding-top: 2px; background: #555; }
.opened span { writing-mode: vertical-rl; }

/* tool inspector and status */
.inspector { display: flex; align-items: center; height: 41px; padding-left: 4px; background: #4a4a4a; border-top: 1px solid #777; border-left: 1px solid #858585; border-bottom: 1px solid #404040; }
.inspector > .grip { height: 30px; }
.fields { display: flex; gap: 4px; height: 37px; padding: 0 0 2px 2px; background: #525252; align-self: flex-end; }
.field { display: flex; flex-direction: column; }
.field label { display: flex; align-items: center; height: 15px; padding-left: 1px; }
.field label svg { width: 10px; height: 10px; }
.field input { width: 53px; height: 20px; padding: 0 4px; background: #292929; border: 1px solid #9a9a9a; }
.spin { display: flex; height: 20px; background: #292929; border: 1px solid #9a9a9a; }
.spin input { width: 35px; height: 18px; border: 0; }
.spin button { width: 15px; height: 8px; margin-bottom: 1px; background: #4a4a4a; }
.spin .up, .spin .down { border-width: 2px; }
.spin .up { border-top: 0; }
.spin .down { border-bottom: 0; }

.status { display: flex; align-items: center; height: 26px; padding: 0 16px 0 8px; background: #555; }
.hint { margin-right: auto; padding-bottom: 4px; }
.status > button { margin-right: 8px; padding-top: 2px; }
.coord { display: flex; align-items: center; padding-top: 3px; margin-right: 8px; }
.status > .coord:nth-of-type(1) { margin-left: 8px; }
.status > .off { margin-right: 9px; }
.coord label { display: flex; flex-direction: column; align-items: center; width: 11px; font-size: 8px; line-height: 8px; color: #bbb; gap: 1px; }
.coord label input { appearance: none; width: 8px; height: 8px; border: 1px solid #eee; }
.coord > input { width: 73px; height: 20px; padding: 0 4px; background: #292929; border: 1px solid #9a9a9a; }
.off label input { border-color: #999; }
.off > input { color: #888; }
.zoom, .clock { padding-bottom: 4px; }
.zoom { width: 57px; }
```
